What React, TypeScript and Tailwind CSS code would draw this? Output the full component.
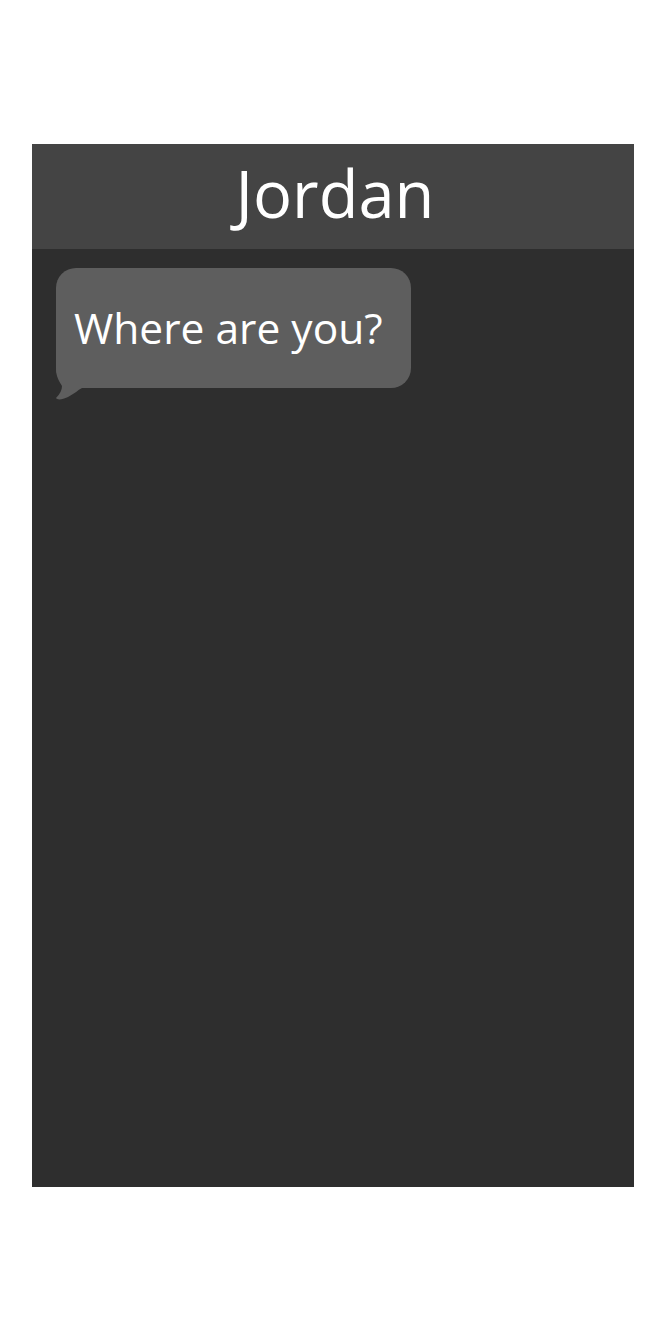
import React from "react";

const App: React.FC = () => {
  return (
    <div className="min-h-[1334px] w-full bg-white pt-[144px] pl-[32px]" style={{ fontFamily: '"Open Sans", sans-serif' }}>
      <div className="flex h-[1043px] w-[602px] flex-col bg-[#2e2e2e]">
        <header className="flex h-[105px] items-center justify-center bg-[#444444] pb-[6px] pl-[4px]">
          <h1 className="text-[65px] leading-none text-white">Jordan</h1>
        </header>
        <div className="pt-[19px] pl-[24px]">
          <div className="relative inline-flex h-[120px] w-[355px] items-center rounded-[20px] bg-[#5e5e5e] pl-[18px]">
            <span className="text-[42.5px] leading-none text-white">Where are you?</span>
            <svg
              className="absolute left-0 top-[100px]"
              width="30"
              height="32"
              viewBox="0 0 30 32"
            >
              <path d="M0 0 H20 V20 H26 C22 22 18 26 12 29 C6 32 1 32 0 30 C4 26 6 22 6 18 C4 14 0 10 0 0 Z" fill="#5e5e5e" />
            </svg>
          </div>
        </div>
      </div>
    </div>
  );
};

export default App;
